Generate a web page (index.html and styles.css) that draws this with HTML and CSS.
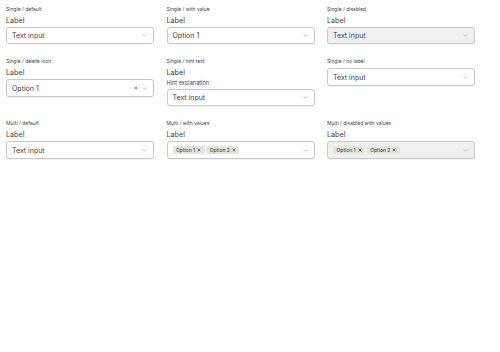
FILE: index.html
```html
<!DOCTYPE html>
<html lang="en">
<head>
  <meta charset="UTF-8" />
  <meta name="viewport" content="width=device-width, initial-scale=1.0" />
  <title>Select variants</title>
  <link rel="stylesheet" href="styles.css">
</head>
<body>
  <div class="grid">
    <div class="cell">
      <div class="title">Single / default</div>
      <div class="label">Label</div>
      <div class="select">
        <span class="value">Text input</span>
        <span class="chevron"><svg viewBox="0 0 6 4" width="5" height="3"><path d="M0.5 0.5 L3 3 L5.5 0.5" fill="none" stroke="#999" stroke-width="0.8"/></svg></span>
      </div>
    </div>
    <div class="cell">
      <div class="title">Single / with value</div>
      <div class="label">Label</div>
      <div class="select">
        <span class="value">Option 1</span>
        <span class="chevron"><svg viewBox="0 0 6 4" width="5" height="3"><path d="M0.5 0.5 L3 3 L5.5 0.5" fill="none" stroke="#999" stroke-width="0.8"/></svg></span>
      </div>
    </div>
    <div class="cell">
      <div class="title">Single / disabled</div>
      <div class="label">Label</div>
      <div class="select disabled">
        <span class="value">Text input</span>
        <span class="chevron"><svg viewBox="0 0 6 4" width="5" height="3"><path d="M0.5 0.5 L3 3 L5.5 0.5" fill="none" stroke="#aaa" stroke-width="0.8"/></svg></span>
      </div>
    </div>

    <div class="cell">
      <div class="title">Single / delete icon</div>
      <div class="label">Label</div>
      <div class="select">
        <span class="value">Option 1</span>
        <span class="clear"><svg viewBox="0 0 6 6" width="4" height="4"><path d="M1 1 L5 5 M5 1 L1 5" stroke="#555" stroke-width="0.9"/></svg></span>
        <span class="chevron"><svg viewBox="0 0 6 4" width="5" height="3"><path d="M0.5 0.5 L3 3 L5.5 0.5" fill="none" stroke="#999" stroke-width="0.8"/></svg></span>
      </div>
    </div>
    <div class="cell">
      <div class="title">Single / hint text</div>
      <div class="label">Label</div>
      <div class="hint">Hint explanation</div>
      <div class="select">
        <span class="value">Text input</span>
        <span class="chevron"><svg viewBox="0 0 6 4" width="5" height="3"><path d="M0.5 0.5 L3 3 L5.5 0.5" fill="none" stroke="#999" stroke-width="0.8"/></svg></span>
      </div>
    </div>
    <div class="cell">
      <div class="title">Single / no label</div>
      <div class="select">
        <span class="value">Text input</span>
        <span class="chevron"><svg viewBox="0 0 6 4" width="5" height="3"><path d="M0.5 0.5 L3 3 L5.5 0.5" fill="none" stroke="#999" stroke-width="0.8"/></svg></span>
      </div>
    </div>

    <div class="cell">
      <div class="title">Multi / default</div>
      <div class="label">Label</div>
      <div class="select">
        <span class="value">Text input</span>
        <span class="chevron"><svg viewBox="0 0 6 4" width="5" height="3"><path d="M0.5 0.5 L3 3 L5.5 0.5" fill="none" stroke="#999" stroke-width="0.8"/></svg></span>
      </div>
    </div>
    <div class="cell">
      <div class="title">Multi / with values</div>
      <div class="label">Label</div>
      <div class="select multi">
        <span class="chips">
          <span class="chip">Option 1 <svg viewBox="0 0 6 6" width="4" height="4"><path d="M1 1 L5 5 M5 1 L1 5" stroke="#333" stroke-width="1"/></svg></span>
          <span class="chip">Option 2 <svg viewBox="0 0 6 6" width="4" height="4"><path d="M1 1 L5 5 M5 1 L1 5" stroke="#333" stroke-width="1"/></svg></span>
        </span>
        <span class="chevron"><svg viewBox="0 0 6 4" width="5" height="3"><path d="M0.5 0.5 L3 3 L5.5 0.5" fill="none" stroke="#999" stroke-width="0.8"/></svg></span>
      </div>
    </div>
    <div class="cell">
      <div class="title">Multi / disabled with values</div>
      <div class="label">Label</div>
      <div class="select multi disabled">
        <span class="chips">
          <span class="chip">Option 1 <svg viewBox="0 0 6 6" width="4" height="4"><path d="M1 1 L5 5 M5 1 L1 5" stroke="#333" stroke-width="1"/></svg></span>
          <span class="chip">Option 2 <svg viewBox="0 0 6 6" width="4" height="4"><path d="M1 1 L5 5 M5 1 L1 5" stroke="#333" stroke-width="1"/></svg></span>
        </span>
        <span class="chevron"><svg viewBox="0 0 6 4" width="5" height="3"><path d="M0.5 0.5 L3 3 L5.5 0.5" fill="none" stroke="#aaa" stroke-width="0.8"/></svg></span>
      </div>
    </div>
  </div>
</body>
</html>
```

FILE: styles.css
```css
body {
  margin: 0;
  padding: 5.5px 6px;
  font-family: Inter, "Noto Sans", sans-serif;
  background-color: #fff;
  color: #444;
}
.grid {
  width: 469px;
  display: grid;
  grid-template-columns: 148px 148px 148px;
  column-gap: 12.5px;
  row-gap: 14px;
  align-items: start;
}
.title {
  font-size: 5px;
  line-height: 7px;
  color: #444;
  margin-bottom: 3.2px;
}
.label {
  font-size: 7.2px;
  line-height: 10px;
  margin-bottom: 1px;
  color: #444;
}
.hint {
  font-size: 5.6px;
  line-height: 8px;
  margin-top: 0.6px;
  margin-bottom: 1.3px;
  color: #444;
}
.select {
  height: 17.5px;
  box-sizing: border-box;
  border: 1px solid #c9c9c9;
  border-radius: 3px;
  box-shadow: 0 0.5px 1px rgba(0, 0, 0, 0.06);
  display: flex;
  align-items: center;
  padding: 0 6px 0 5px;
  background-color: #fff;
}
.select.disabled {
  background-color: #efefef;
}
.value {
  flex: 1;
  font-size: 7px;
  color: #444;
}
.clear {
  display: flex;
  margin-right: 4px;
}
.chevron {
  display: flex;
}
.chips {
  flex: 1;
  display: flex;
  gap: 1.6px;
}
.chip {
  display: flex;
  align-items: center;
  gap: 2px;
  height: 8.5px;
  padding: 0 3.5px;
  background-color: #e1e5db;
  border-radius: 1px;
  font-size: 5px;
  color: #333;
}
```
